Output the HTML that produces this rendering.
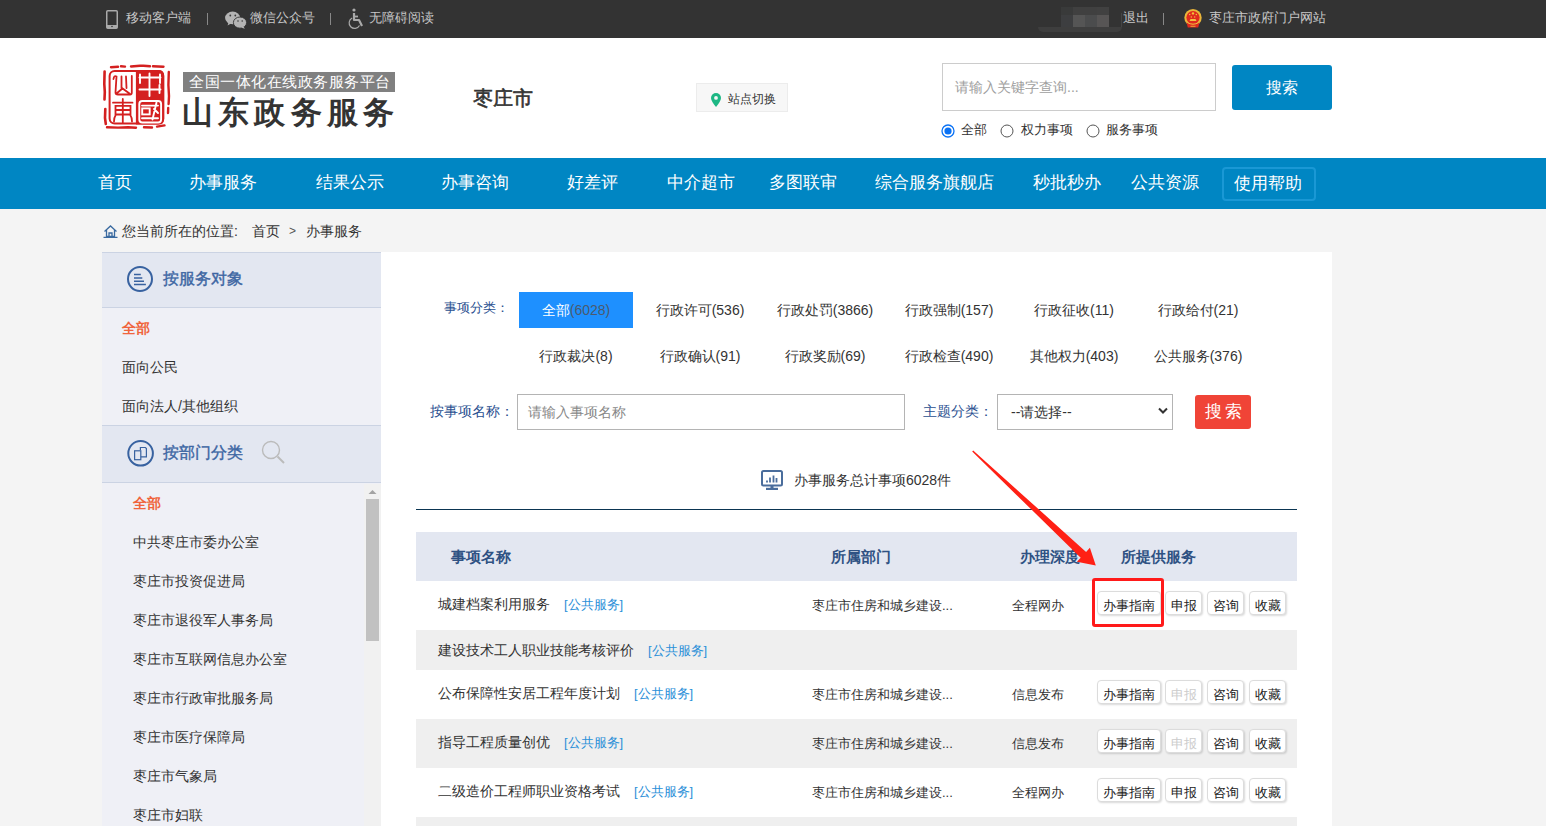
<!DOCTYPE html>
<html><head><meta charset="utf-8">
<style>
*{margin:0;padding:0;box-sizing:border-box}
html,body{width:1546px;height:826px;overflow:hidden;background:#f4f4f4;font-family:"Liberation Sans",sans-serif;color:#333}
.a{position:absolute;white-space:nowrap}
#top{position:absolute;left:0;top:0;width:1546px;height:38px;background:#333}
#top .t{position:absolute;top:10px;font-size:13px;color:#c8c8c8;line-height:16px;white-space:nowrap}
#hdr{position:absolute;left:0;top:38px;width:1546px;height:120px;background:#fff}
#nav{position:absolute;left:0;top:158px;width:1546px;height:51px;background:#0086c3}
#nav .n{position:absolute;top:13px;font-size:17px;color:#fff;line-height:24px;white-space:nowrap}
#crumb{position:absolute;left:122px;top:222px;font-size:14px;color:#333;line-height:18px;white-space:nowrap}
#side{position:absolute;left:102px;top:252px;width:279px;height:574px;background:#eff0f6}
.sh{position:absolute;left:0;width:279px;height:56px;background:#e3e7f1;border-top:1px solid #cbd3e3;border-bottom:1px solid #cbd3e3}
.sh .ttl{position:absolute;left:61px;top:14.5px;font-size:16px;color:#3d66a3;-webkit-text-stroke:0.4px #3d66a3;line-height:22px;white-space:nowrap}
.si{position:absolute;font-size:14px;color:#333;line-height:18px;white-space:nowrap}
.si.on{color:#f0643c;font-weight:bold}
#main{position:absolute;left:381px;top:252px;width:951px;height:574px;background:#fff}
.cat{position:absolute;font-size:14px;color:#333;line-height:18px;white-space:nowrap;transform:translateX(-50%)}
.lbl{position:absolute;font-size:14px;color:#2a5090;line-height:18px;white-space:nowrap}
.row{position:absolute;left:416px;width:881px}
.row .nm{position:absolute;left:22px;font-size:14px;color:#333;line-height:18px;white-space:nowrap}
.row .nm b{font-weight:normal;color:#2b8fd8;margin-left:14px;font-size:13px}
.row .dp{position:absolute;left:396px;font-size:13px;color:#333;line-height:18px;white-space:nowrap}
.row .dg{position:absolute;left:596px;font-size:13px;color:#333;line-height:18px;white-space:nowrap}
.btn{position:absolute;height:24px;border:1px solid #dcdcdc;border-radius:4px;background:#fff;box-shadow:1px 1px 2px rgba(0,0,0,.15);font-size:13px;line-height:27px;text-align:center;color:#222;white-space:nowrap}
.btn.dis{color:#ccc}
.th{position:absolute;font-size:15px;font-weight:bold;color:#2f5283;line-height:18px;white-space:nowrap}
</style></head><body>
<div id="top">
  <svg class="a" style="left:106px;top:10px" width="12" height="19" viewBox="0 0 12 19"><rect x="0.75" y="0.75" width="10.5" height="17.5" rx="1" fill="none" stroke="#aaa" stroke-width="1.5"/><rect x="1" y="15" width="10" height="3" fill="#aaa"/><circle cx="6" cy="16.5" r="0.8" fill="#333"/></svg>
  <div class="t" style="left:126px">移动客户端</div>
  <div class="a" style="left:207px;top:13px;width:1px;height:12px;background:#888"></div>
  <svg class="a" style="left:225px;top:11px" width="22" height="18" viewBox="0 0 22 18"><ellipse cx="7.6" cy="6.9" rx="7.5" ry="6.3" fill="#b4b4b4"/><path d="M3.5 11 L2.6 14.5 L6.5 12.2Z" fill="#b4b4b4"/><ellipse cx="15" cy="11.6" rx="6.6" ry="5.6" fill="#b4b4b4" stroke="#333" stroke-width="0.9"/><path d="M18.5 15.5 L19.8 17.8 L16 16.6Z" fill="#b4b4b4"/><circle cx="5.3" cy="4.5" r="0.9" fill="#3a3a3a"/><circle cx="10.3" cy="4.5" r="0.9" fill="#3a3a3a"/><circle cx="13" cy="10" r="0.8" fill="#3a3a3a"/><circle cx="17.2" cy="10" r="0.8" fill="#3a3a3a"/></svg>
  <div class="t" style="left:250px">微信公众号</div>
  <div class="a" style="left:330px;top:13px;width:1px;height:12px;background:#888"></div>
  <svg class="a" style="left:348px;top:8px" width="18" height="22" viewBox="0 0 18 22"><circle cx="6" cy="2" r="1.6" fill="#aaa"/><path d="M6 5 L6 12 L11 12 L14 18" fill="none" stroke="#aaa" stroke-width="2.2" stroke-linejoin="round"/><path d="M6 8.5 L10 8.5" stroke="#aaa" stroke-width="1.8"/><path d="M4.2 10 A5.5 5.5 0 1 0 11.5 17.5" fill="none" stroke="#aaa" stroke-width="1.2"/></svg>
  <div class="t" style="left:369px">无障碍阅读</div>
  <div class="a" style="left:1038px;top:27px;width:84px;height:5px;background:#3e3e3e;border-radius:0 0 20px 20px"></div><div class="a" style="left:1121px;top:13px;width:1px;height:14px;background:#444"></div>
  <div class="a" style="left:1061px;top:7px;width:12px;height:8px;background:#393a3a"></div>
  <div class="a" style="left:1073px;top:7px;width:24px;height:8px;background:#404040"></div>
  <div class="a" style="left:1097px;top:7px;width:12px;height:8px;background:#414141"></div>
  <div class="a" style="left:1061px;top:15px;width:12px;height:12px;background:#3d3e40"></div>
  <div class="a" style="left:1073px;top:15px;width:12px;height:12px;background:#555"></div>
  <div class="a" style="left:1085px;top:15px;width:12px;height:12px;background:#4b4c4d"></div>
  <div class="a" style="left:1097px;top:15px;width:12px;height:12px;background:#575555"></div>
  <div class="t" style="left:1123px">退出</div>
  <div class="a" style="left:1163px;top:13px;width:1px;height:12px;background:#888"></div>
  <svg class="a" style="left:1184px;top:9px" width="18" height="19" viewBox="0 0 18 19"><circle cx="9" cy="8.7" r="8.7" fill="#e9b53a"/><circle cx="9" cy="8.6" r="6.6" fill="#e02a1e"/><path d="M2.5 13.5 L3.8 18.5 L14.2 18.5 L15.5 13.5 Q9 17 2.5 13.5Z" fill="#e0281e"/><circle cx="9" cy="4.4" r="1.2" fill="#f3c43a"/><circle cx="5.7" cy="5.6" r="0.75" fill="#f3c43a"/><circle cx="12.3" cy="5.6" r="0.75" fill="#f3c43a"/><circle cx="7.3" cy="8" r="0.7" fill="#f3c43a"/><circle cx="10.7" cy="8" r="0.7" fill="#f3c43a"/><path d="M5.5 12 L6.5 10 L11.5 10 L12.5 12Z" fill="#f2c040"/><path d="M3.5 13.6 Q9 16.8 14.5 13.6" stroke="#f0c040" stroke-width="1" fill="none"/><rect x="6.5" y="16.8" width="5" height="0.9" fill="#e9b53a"/></svg>
  <div class="t" style="left:1209px">枣庄市政府门户网站</div>
</div>

<div id="hdr">
  <svg class="a" style="left:100px;top:22px" width="75" height="75" viewBox="100 60 75 75">
    <g fill="none" stroke="#d42020" stroke-linecap="round">
      <path d="M111 67.2 L118 66.8 M121 66.3 L125 66.6 M131 66.5 L140 65.8 Q146 65.5 150 66.2 M153 66.3 L163.5 66.8" stroke-width="2.4"/>
      <path d="M104.6 71.5 L104.3 84 L104.8 92 L104.5 99.5 M105.3 109 L105 118 L105.8 124" stroke-width="2.6"/>
      <path d="M168.8 72 L168.4 85 L169 96 L168.6 104 M168.2 108 L168 113" stroke-width="2.4"/>
      <path d="M107 127.2 L118 127.6 L128 127.3 L136 127.8 M144 127.3 L152 127.5 M157 126.6 L164.5 125.4" stroke-width="2.4"/>
    </g>
    <rect x="109.6" y="71" width="53.6" height="52.6" rx="5" fill="#fff" stroke="#d42020" stroke-width="2"/>
    <path d="M135.9 70 L158.6 70 Q164.2 70 164.2 75.6 L164.2 119 Q164.2 124.6 158.6 124.6 L135.9 124.6Z" fill="#d42020"/>
    <g fill="none" stroke="#fff" stroke-width="1.9" stroke-linecap="round">
      <path d="M139.5 77.5 L160.5 77.5 M139.5 89.5 L160.5 89.5 M140 74.5 L140 83 M160 74.5 L160 83 M149.5 73.5 L149.5 96 M159.5 85 L159.5 93"/>
      <rect x="139.3" y="101" width="21.8" height="21.5" rx="3"/>
      <path d="M142 105.6 L158 105.6 M142 118.2 L158 118.2 M156.5 102.5 L152.5 119.5 M154 109 L158 113"/>
      <rect x="142.2" y="108.4" width="7.5" height="6" />
    </g>
    <g fill="none" stroke="#d42020" stroke-width="1.8" stroke-linecap="round">
      <path d="M113.5 79 Q114 75 116.5 76.5 L115.5 92.5 Q115.5 94.5 118 94.5 L130 94.5 Q132 94.5 131.8 92 L131.8 76 M121.5 76.5 L121.5 88 M126 76.5 L126.5 88 M116.5 93.5 L122.5 88.5 L129.5 93.5"/>
      <path d="M113 102.7 L132.5 102.7 M115.5 105.8 L130.5 105.8 L130.5 114.5 L115.5 114.5Z M115.5 110 L130.5 110 M122.8 99 L122.8 122.5 M115.5 115.5 Q113.8 118 114 121.5 M130.5 115.5 Q132.2 118 132 121.5"/>
    </g>
  </svg>
  <div class="a" style="left:183px;top:34px;width:212px;height:20px;background:#808080"></div>
  <div class="a" style="left:189px;top:35px;font-size:15px;line-height:18px;color:#fff;letter-spacing:0.53px">全国一体化在线政务服务平台</div>
  <div class="a" style="left:182px;top:55px;font-size:31px;line-height:40px;color:#333;font-weight:bold;letter-spacing:5.2px">山东政务服务</div>
  <div class="a" style="left:473px;top:47px;font-size:20px;line-height:26px;color:#333;-webkit-text-stroke:0.6px #333">枣庄市</div>
  <div class="a" style="left:696px;top:45px;width:92px;height:29px;background:#f7f7f7;border:1px solid #ececec"></div>
  <svg class="a" style="left:711px;top:55px" width="10" height="14" viewBox="0 0 10 14"><path d="M5 0 A5 5 0 0 0 0 5 C0 8 5 14 5 14 C5 14 10 8 10 5 A5 5 0 0 0 5 0Z" fill="#1db784"/><circle cx="5" cy="4.9" r="1.9" fill="#f7f7f7"/></svg>
  <div class="a" style="left:728px;top:53px;font-size:12px;line-height:16px;color:#333">站点切换</div>
  <div class="a" style="left:942px;top:25px;width:274px;height:48px;border:1px solid #ccc;background:#fff"></div>
  <div class="a" style="left:955px;top:40px;font-size:14px;line-height:18px;color:#9e9e9e">请输入关键字查询...</div>
  <div class="a" style="left:1232px;top:27px;width:100px;height:45px;background:#0086c3;border-radius:3px;color:#fff;font-size:16px;line-height:45px;text-align:center">搜索</div>
  <svg class="a" style="left:941px;top:86px" width="14" height="14" viewBox="0 0 14 14"><circle cx="7" cy="7" r="6" fill="#fff" stroke="#0a72f5" stroke-width="1.3"/><circle cx="7" cy="7" r="3.6" fill="#0a72f5"/></svg>
  <div class="a" style="left:961px;top:84px;font-size:13px;line-height:16px;color:#333">全部</div>
  <svg class="a" style="left:1000px;top:86px" width="14" height="14" viewBox="0 0 14 14"><circle cx="7" cy="7" r="6" fill="#fff" stroke="#555" stroke-width="1"/></svg>
  <div class="a" style="left:1021px;top:84px;font-size:13px;line-height:16px;color:#333">权力事项</div>
  <svg class="a" style="left:1086px;top:86px" width="14" height="14" viewBox="0 0 14 14"><circle cx="7" cy="7" r="6" fill="#fff" stroke="#555" stroke-width="1"/></svg>
  <div class="a" style="left:1106px;top:84px;font-size:13px;line-height:16px;color:#333">服务事项</div>
</div>

<div id="nav">
  <div class="n" style="left:98px">首页</div>
  <div class="n" style="left:189px">办事服务</div>
  <div class="n" style="left:316px">结果公示</div>
  <div class="n" style="left:441px">办事咨询</div>
  <div class="n" style="left:567px">好差评</div>
  <div class="n" style="left:667px">中介超市</div>
  <div class="n" style="left:769px">多图联审</div>
  <div class="n" style="left:875px">综合服务旗舰店</div>
  <div class="n" style="left:1033px">秒批秒办</div>
  <div class="n" style="left:1131px">公共资源</div>
  <div class="a" style="left:1222px;top:9px;width:94px;height:34px;border:2px solid #1a98d5;border-radius:4px"></div>
  <div class="n" style="left:1234px;top:14px">使用帮助</div>
</div>

<svg class="a" style="left:103px;top:225px" width="15" height="13" viewBox="0 0 15 13"><path d="M1.5 6.5 L7.5 1 L13.5 6.5 M3.5 5 L3.5 11.5 L11.5 11.5 L11.5 5 M6 11.5 L6 8 L9 8 L9 11.5 M0.5 12.5 L14.5 12.5" fill="none" stroke="#3a6aa0" stroke-width="1.3"/></svg>
<div id="crumb">您当前所在的位置:</div>
<div class="a" style="left:252px;top:222px;font-size:14px;line-height:18px;color:#333">首页</div>
<div class="a" style="left:289px;top:222px;font-size:12px;line-height:18px;color:#555">&gt;</div>
<div class="a" style="left:306px;top:222px;font-size:14px;line-height:18px;color:#333">办事服务</div>

<div id="side">
  <div class="sh" style="top:0">
    <svg class="a" style="left:24px;top:13px" width="28" height="28" viewBox="0 0 28 28"><circle cx="14" cy="13" r="12" fill="none" stroke="#3862a0" stroke-width="2"/><path d="M8 8.6 L14.8 8.6 M8 11.9 L16.3 11.9 M8 15.3 L18 15.3 M8 18.4 L19.9 18.4" stroke="#3862a0" stroke-width="1.5"/></svg>
    <div class="ttl">按服务对象</div>
  </div>
  <div class="si on" style="left:20px;top:67px">全部</div>
  <div class="si" style="left:20px;top:106px">面向公民</div>
  <div class="si" style="left:20px;top:145px">面向法人/其他组织</div>
  <div class="sh" style="top:173px;height:58px">
    <svg class="a" style="left:24px;top:13px" width="28" height="28" viewBox="0 0 28 28"><circle cx="14.6" cy="14.3" r="12.3" fill="none" stroke="#3862a0" stroke-width="2"/><path d="M14.4 11.2 L14.4 8.5 L19.4 8.5 L20.4 9.5 L20.4 17.8 L14.8 17.8" fill="none" stroke="#3862a0" stroke-width="1.2"/><rect x="8.6" y="11.8" width="6.2" height="8.9" fill="none" stroke="#3862a0" stroke-width="1.2"/></svg>
    <div class="ttl" style="top:16px">按部门分类</div>
    <svg class="a" style="left:159px;top:14px" width="26" height="26" viewBox="0 0 26 26"><circle cx="10" cy="10" r="8.5" fill="none" stroke="#bbb" stroke-width="1.4"/><path d="M16.5 16.5 L23 23" stroke="#bbb" stroke-width="2"/></svg>
  </div>
  <div class="a" style="left:262px;top:232px;width:17px;height:342px;background:#f1f1f1"></div>
  <svg class="a" style="left:266px;top:237px" width="9" height="6" viewBox="0 0 9 6"><path d="M0.5 5 L4.5 1 L8.5 5Z" fill="#a3a3a3"/></svg>
  <div class="a" style="left:264px;top:247px;width:13px;height:142px;background:#c1c1c1"></div>
  <div class="si on" style="left:31px;top:242px">全部</div>
  <div class="si" style="left:31px;top:281px">中共枣庄市委办公室</div>
  <div class="si" style="left:31px;top:320px">枣庄市投资促进局</div>
  <div class="si" style="left:31px;top:359px">枣庄市退役军人事务局</div>
  <div class="si" style="left:31px;top:398px">枣庄市互联网信息办公室</div>
  <div class="si" style="left:31px;top:437px">枣庄市行政审批服务局</div>
  <div class="si" style="left:31px;top:476px">枣庄市医疗保障局</div>
  <div class="si" style="left:31px;top:515px">枣庄市气象局</div>
  <div class="si" style="left:31px;top:554px">枣庄市妇联</div>
</div>

<div id="main"></div>
<div class="lbl" style="left:444px;top:299px;font-size:13px">事项分类：</div>
<div class="a" style="left:519px;top:292px;width:114px;height:36px;background:#1e90ff"></div>
<div class="cat" style="left:576px;top:301px"><span style="color:#fff">全部</span><span style="color:#4b5a6e">(6028)</span></div>
<div class="cat" style="left:700px;top:301px">行政许可(536)</div>
<div class="cat" style="left:825px;top:301px">行政处罚(3866)</div>
<div class="cat" style="left:949px;top:301px">行政强制(157)</div>
<div class="cat" style="left:1074px;top:301px">行政征收(11)</div>
<div class="cat" style="left:1198px;top:301px">行政给付(21)</div>
<div class="cat" style="left:576px;top:347px">行政裁决(8)</div>
<div class="cat" style="left:700px;top:347px">行政确认(91)</div>
<div class="cat" style="left:825px;top:347px">行政奖励(69)</div>
<div class="cat" style="left:949px;top:347px">行政检查(490)</div>
<div class="cat" style="left:1074px;top:347px">其他权力(403)</div>
<div class="cat" style="left:1198px;top:347px">公共服务(376)</div>

<div class="lbl" style="left:430px;top:402px">按事项名称：</div>
<div class="a" style="left:517px;top:394px;width:388px;height:36px;border:1px solid #b4b4b4;background:#fff"></div>
<div class="a" style="left:528px;top:403px;font-size:14px;line-height:18px;color:#888">请输入事项名称</div>
<div class="lbl" style="left:923px;top:402px">主题分类：</div>
<div class="a" style="left:997px;top:394px;width:176px;height:36px;border:1px solid #b4b4b4;background:#fff"></div>
<div class="a" style="left:1011px;top:403px;font-size:14px;line-height:18px;color:#333">--请选择--</div>
<svg class="a" style="left:1158px;top:407px" width="10" height="8" viewBox="0 0 10 8"><path d="M1 1.5 L5 5.5 L9 1.5" fill="none" stroke="#333" stroke-width="2"/></svg>
<div class="a" style="left:1195px;top:395px;width:56px;height:34px;background:#f04437;border-radius:3px;color:#fff;font-size:17px;line-height:34px;text-align:center;letter-spacing:3px;padding-left:3px">搜索</div>

<svg class="a" style="left:761px;top:470px" width="22" height="20" viewBox="0 0 22 20"><rect x="1" y="1" width="20" height="14.5" rx="1.5" fill="none" stroke="#4a6d9c" stroke-width="2"/><path d="M6 12.5 L6 10.5 M9 12.5 L9 7.5 M12.5 12.5 L12.5 5.5 M15.5 12.5 L15.5 8" stroke="#4a6d9c" stroke-width="1.8"/><rect x="9.5" y="15.5" width="3" height="2.5" fill="#4a6d9c"/><rect x="5" y="17.8" width="12" height="2.2" fill="#4a6d9c"/></svg>
<div class="a" style="left:794px;top:471px;font-size:14px;line-height:18px;color:#333">办事服务总计事项6028件</div>
<div class="a" style="left:416px;top:509px;width:881px;height:1px;background:#0b3552"></div>

<div class="row" style="top:532px;height:49px;background:#e3e7f1">
  <div class="th" style="left:35px;top:16px">事项名称</div>
  <div class="th" style="left:415px;top:16px">所属部门</div>
  <div class="th" style="left:604px;top:16px">办理深度</div>
  <div class="th" style="left:705px;top:16px">所提供服务</div>
</div>
<div class="row" style="top:581px;height:49px;background:#fff">
  <div class="nm" style="top:14px">城建档案利用服务<b>[公共服务]</b></div>
  <div class="dp" style="top:16px">枣庄市住房和城乡建设...</div>
  <div class="dg" style="top:16px">全程网办</div>
</div>
<div class="row" style="top:630px;height:40px;background:#efefef">
  <div class="nm" style="top:11px">建设技术工人职业技能考核评价<b>[公共服务]</b></div>
</div>
<div class="row" style="top:670px;height:49px;background:#fff">
  <div class="nm" style="top:14px">公布保障性安居工程年度计划<b>[公共服务]</b></div>
  <div class="dp" style="top:16px">枣庄市住房和城乡建设...</div>
  <div class="dg" style="top:16px">信息发布</div>
</div>
<div class="row" style="top:719px;height:49px;background:#efefef">
  <div class="nm" style="top:14px">指导工程质量创优<b>[公共服务]</b></div>
  <div class="dp" style="top:16px">枣庄市住房和城乡建设...</div>
  <div class="dg" style="top:16px">信息发布</div>
</div>
<div class="row" style="top:768px;height:49px;background:#fff">
  <div class="nm" style="top:14px">二级造价工程师职业资格考试<b>[公共服务]</b></div>
  <div class="dp" style="top:16px">枣庄市住房和城乡建设...</div>
  <div class="dg" style="top:16px">全程网办</div>
</div>
<div class="row" style="top:817px;height:9px;background:#efefef"></div>

<div class="btn" style="left:1097px;top:591px;width:64px">办事指南</div>
<div class="btn" style="left:1165px;top:591px;width:37px">申报</div>
<div class="btn" style="left:1207px;top:591px;width:37px">咨询</div>
<div class="btn" style="left:1249px;top:591px;width:37px">收藏</div>
<div class="btn" style="left:1097px;top:680px;width:64px">办事指南</div>
<div class="btn dis" style="left:1165px;top:680px;width:37px">申报</div>
<div class="btn" style="left:1207px;top:680px;width:37px">咨询</div>
<div class="btn" style="left:1249px;top:680px;width:37px">收藏</div>
<div class="btn" style="left:1097px;top:729px;width:64px">办事指南</div>
<div class="btn dis" style="left:1165px;top:729px;width:37px">申报</div>
<div class="btn" style="left:1207px;top:729px;width:37px">咨询</div>
<div class="btn" style="left:1249px;top:729px;width:37px">收藏</div>
<div class="btn" style="left:1097px;top:778px;width:64px">办事指南</div>
<div class="btn" style="left:1165px;top:778px;width:37px">申报</div>
<div class="btn" style="left:1207px;top:778px;width:37px">咨询</div>
<div class="btn" style="left:1249px;top:778px;width:37px">收藏</div>

<div class="a" style="left:1092px;top:578px;width:72px;height:49px;border:3px solid #ff1a1a;border-radius:3px"></div>
<svg class="a" style="left:960px;top:440px" width="150" height="140" viewBox="960 440 150 140"><path d="M972.2 451.6 L1080.7 557.7 L1076.9 561.8 L1095.8 565.6 L1089.9 547.8 L1086.1 551.9 L973.2 450.4Z" fill="#ff2015"/></svg>
</body></html>
